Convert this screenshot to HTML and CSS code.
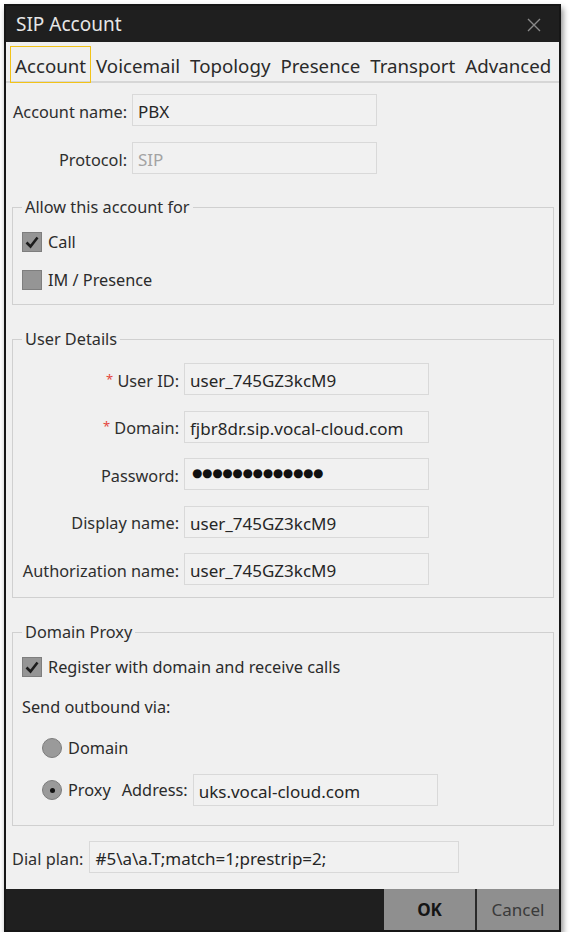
FILE: index.html
```html
<!DOCTYPE html>
<html>
<head>
<meta charset="utf-8">
<link rel="stylesheet" href="styles.css">
</head>
<body>
<div class="window">
  <div class="titlebar">
    <span class="title">SIP Account</span>
    <svg class="close" width="14" height="14" viewBox="0 0 14 14"><path d="M1 1L13 13M13 1L1 13" stroke="#8a8a8a" stroke-width="1.4" fill="none"/></svg>
  </div>
  <div class="tabs">
    <span class="tab active">Account</span>
    <span class="tab">Voicemail</span>
    <span class="tab">Topology</span>
    <span class="tab">Presence</span>
    <span class="tab">Transport</span>
    <span class="tab">Advanced</span>
  </div>
  <div class="content">
    <div class="row first">
      <span class="lbl lbl-main">Account name:</span>
      <div class="input">PBX</div>
    </div>
    <div class="row second">
      <span class="lbl lbl-main">Protocol:</span>
      <div class="input disabled">SIP</div>
    </div>

    <fieldset class="group g-allow">
      <legend>Allow this account for</legend>
      <div class="check-row"><span class="checkbox checked"><svg width="18" height="18" viewBox="0 0 18 18"><path d="M3.5 9.5L7.5 13.5L14.5 4.5" stroke="#1c1c1c" stroke-width="2.6" fill="none"/></svg></span>Call</div>
      <div class="check-row"><span class="checkbox"></span>IM / Presence</div>
    </fieldset>

    <fieldset class="group g-user">
      <legend>User Details</legend>
      <div class="form-rows">
        <div class="row"><span class="lbl lbl-user"><span class="req">*</span> User ID:</span><div class="input">user_745GZ3kcM9</div></div>
        <div class="row"><span class="lbl lbl-user"><span class="req">*</span> Domain:</span><div class="input">fjbr8dr.sip.vocal-cloud.com</div></div>
        <div class="row"><span class="lbl lbl-user">Password:</span><div class="input pwd">●●●●●●●●●●●●●</div></div>
        <div class="row"><span class="lbl lbl-user">Display name:</span><div class="input">user_745GZ3kcM9</div></div>
        <div class="row"><span class="lbl lbl-user">Authorization name:</span><div class="input">user_745GZ3kcM9</div></div>
      </div>
    </fieldset>

    <fieldset class="group g-proxy">
      <legend>Domain Proxy</legend>
      <div class="check-row r40"><span class="checkbox checked"><svg width="18" height="18" viewBox="0 0 18 18"><path d="M3.5 9.5L7.5 13.5L14.5 4.5" stroke="#1c1c1c" stroke-width="2.6" fill="none"/></svg></span>Register with domain and receive calls</div>
      <div class="text-row r40">Send outbound via:</div>
      <div class="radio-row r42"><span class="radio"></span>Domain</div>
      <div class="radio-row r42"><span class="radio selected"></span>Proxy<span class="addr-lbl">Address:</span><div class="input">uks.vocal-cloud.com</div></div>
    </fieldset>

    <div class="row dial">
      <span class="lbl lbl-dial">Dial plan:</span>
      <div class="input wide">#5\a\a.T;match=1;prestrip=2;</div>
    </div>
  </div>
  <div class="footer">
    <button class="btn ok">OK</button>
    <button class="btn cancel">Cancel</button>
  </div>
</div>
</body>
</html>
```

FILE: styles.css
```css
* { box-sizing: border-box; }
html, body { margin: 0; padding: 0; background: #ffffff; }
body {
  font-family: "Noto Sans", "Open Sans", sans-serif;
  font-size: 16.3px;
  color: #2b2b2b;
}
.window {
  margin: 4px 0 0 4px;
  width: 557px;
  height: 928px;
  border: 2px solid #161616;
  background: #f0f0f0;
  display: flex;
  flex-direction: column;
  box-shadow: 2px 4px 6px rgba(0,0,0,0.45);
}
.titlebar {
  height: 36px;
  background: #1f1f1f;
  display: flex;
  align-items: center;
  justify-content: space-between;
  padding: 0 18px 0 10px;
}
.title {
  color: #e6e6e6;
  font-size: 19px;
  line-height: 24px;
}
.close { display: block; margin-top: 2px; }
.tabs {
  height: 41px;
  display: flex;
  align-items: flex-end;
  padding: 0 0 0 4px;
  border-bottom: 2px solid #d6d6d6;
  background: #f0f0f0;
}
.tab {
  height: 37px;
  padding: 3px 4px 0 4px;
  border: 1px solid transparent;
  font-size: 18.7px;
  line-height: 31px;
  color: #2a2a2a;
  white-space: nowrap;
  margin-bottom: -2px;
}
.tab.active { border-color: #f2c318; }
.content {
  flex: 1;
  padding: 11px 5px 0 6px;
  display: flex;
  flex-direction: column;
}
.row {
  display: flex;
  align-items: center;
  gap: 5px;
}
.row.second { margin-top: 16px; }
.lbl {
  text-align: right;
  white-space: nowrap;
  color: #2e2e2e;
  padding-top: 3px;
}
.lbl-main { width: 115px; }
.lbl-user { width: 157px; }
.lbl-dial { width: auto; text-align: left; margin-right: 1px; }
.req { color: #e5463d; font-size: 13px; vertical-align: 3px; }
.input {
  width: 245px;
  height: 32px;
  border: 1px solid #d9d9d9;
  background: #f1f1f1;
  padding: 2px 5px 0 5px;
  line-height: 29px;
  font-size: 17px;
  white-space: nowrap;
  overflow: hidden;
  color: #262626;
}
.input.disabled { color: #a3a3a3; }
.input.wide { width: 370px; }
.input.pwd {
  font-family: "DejaVu Sans", sans-serif;
  font-size: 11.8px;
  letter-spacing: -0.2px;
  color: #111;
  padding-left: 7px;
  padding-top: 0;
}
.group {
  margin: 23px 0 0 0;
  border: 1px solid #d0d0d0;
  padding: 6px 9px 5px 9px;
  min-width: 0;
}
.group legend {
  padding: 0 3px;
  line-height: 20px;
  font-size: 16.3px;
  color: #2e2e2e;
}
.g-user { margin-top: 24px; padding: 14px 9px 12px 9px; }
.g-proxy { margin-top: 24px; padding: 5px 9px 14px 9px; }
.form-rows { display: flex; flex-direction: column; gap: 15.5px; }
.check-row {
  height: 38px;
  display: flex;
  align-items: center;
  gap: 6px;
}
.r40 { height: 40px; }
.r42 { height: 42px; }
.text-row { display: flex; align-items: center; }
.checkbox {
  width: 20px;
  height: 20px;
  background: #959595;
  border: 1px solid #7e7e7e;
  display: flex;
  align-items: center;
  justify-content: center;
}
.radio-row {
  display: flex;
  align-items: center;
  padding-left: 20px;
}
.radio {
  width: 20px;
  height: 20px;
  border-radius: 50%;
  background: #9a9a9a;
  border: 1px solid #7c7c7c;
  margin-right: 6px;
  display: flex;
  align-items: center;
  justify-content: center;
}
.radio.selected::after {
  content: "";
  width: 5px;
  height: 5px;
  border-radius: 50%;
  background: #111;
}
.addr-lbl { margin-left: 11px; margin-right: 5px; }
.dial { margin-top: 15px; gap: 5px; }
.footer {
  height: 41px;
  background: #1f1f1f;
  display: flex;
  justify-content: flex-end;
}
.btn {
  border: none;
  margin: 0;
  height: 41px;
  background: #8f8f8f;
  font-family: "Noto Sans", "Open Sans", sans-serif;
  font-size: 17px;
  padding: 0;
}
.btn.ok {
  width: 93px;
  font-weight: 700;
  color: #151515;
  border-right: 2px solid #2a2a2a;
}
.btn.cancel {
  width: 82px;
  color: #3a3a3a;
}
```
